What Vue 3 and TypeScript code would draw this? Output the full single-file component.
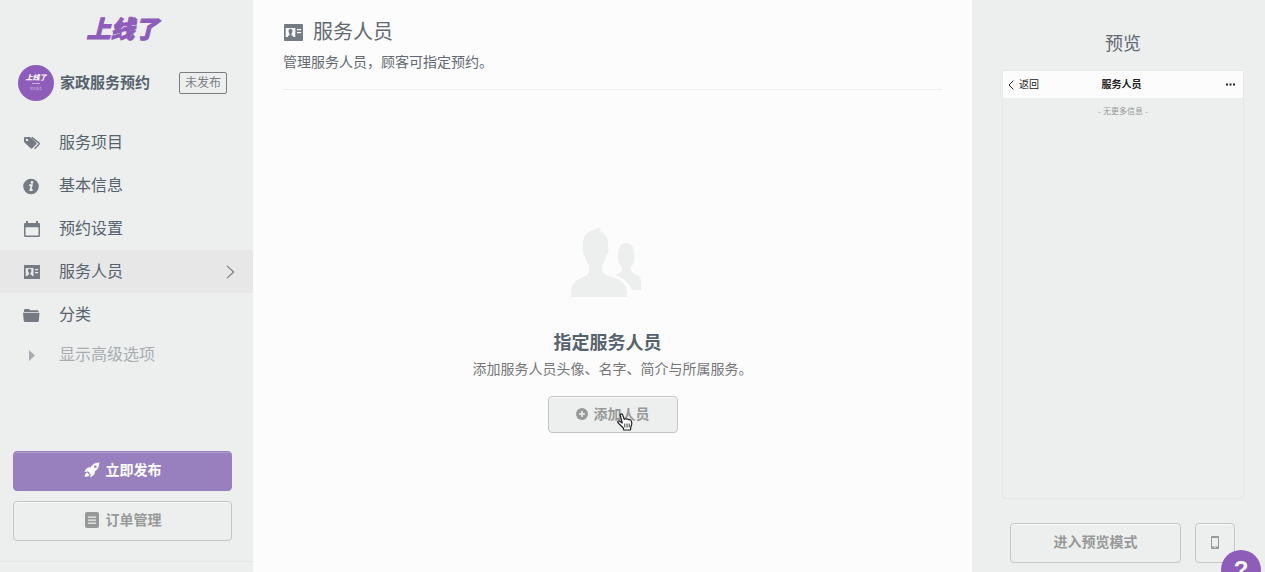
<script setup lang="ts">
import { ref } from 'vue'

type IconName = 'tags' | 'info' | 'calendar' | 'card' | 'folder'

interface MenuItem {
  label: string
  icon: IconName
}

const menu: MenuItem[] = [
  { label: '服务项目', icon: 'tags' },
  { label: '基本信息', icon: 'info' },
  { label: '预约设置', icon: 'calendar' },
  { label: '服务人员', icon: 'card' },
  { label: '分类', icon: 'folder' },
]

const active = ref('服务人员')
</script>

<template>
  <div class="page">
    <aside class="sidebar">
      <div class="logo">上线了</div>

      <div class="site">
        <div class="avatar">
          <span class="avatar-name">上线了</span>
          <span class="avatar-line"></span>
          <span class="avatar-sub">家政服务</span>
        </div>
        <strong class="site-name">家政服务预约</strong>
        <span class="status">未发布</span>
      </div>

      <nav class="menu">
        <a
          v-for="item in menu"
          :key="item.label"
          href="#"
          class="menu-item"
          :class="{ active: item.label === active }"
          @click.prevent="active = item.label"
        >
          <svg v-if="item.icon === 'tags'" class="menu-icon" viewBox="0 0 18 18" aria-hidden="true">
            <path fill="currentColor" fill-rule="evenodd" d="M1 4.2Q1 3 2.2 3H6.5Q7.3 3 8 3.6L13.2 8.5Q14 9.3 13.2 10.2L9.2 14.3Q8.4 15 7.6 14.3L1.7 8.7Q1 8.1 1 7.3ZM4 4.7A1.2 1.2 0 1 0 4 7.1A1.2 1.2 0 1 0 4 4.7Z" />
            <path fill="none" stroke="currentColor" stroke-width="1.4" d="M9 3.4L16 9.1Q16.5 9.6 16 10.2L11.6 14.7" />
          </svg>
          <svg v-else-if="item.icon === 'info'" class="menu-icon" viewBox="0 0 18 18" aria-hidden="true">
            <circle cx="8" cy="9.5" r="7.8" fill="currentColor" />
            <path fill="none" stroke="#edefee" stroke-width="1.9" d="M6.2 8.1H8.7L7.5 13H9.6" />
            <circle cx="9" cy="5.4" r="1.3" fill="#edefee" />
          </svg>
          <svg v-else-if="item.icon === 'calendar'" class="menu-icon" viewBox="0 0 18 18" aria-hidden="true">
            <path fill="currentColor" fill-rule="evenodd" d="M1 4Q1 3 2 3H3V1H5V3H13V1H15V3H16Q17 3 17 4V15.5Q17 17 15.5 17H2.5Q1 17 1 15.5ZM2.5 7.3V15.5H15.5V7.3Z" />
          </svg>
          <svg v-else-if="item.icon === 'card'" class="menu-icon" viewBox="0 0 18 18" aria-hidden="true">
            <path fill="currentColor" fill-rule="evenodd" d="M1 2H17V16H1ZM2.7 5V13H4.7V12L6 11.4V10Q4.9 8.9 5 7.2Q5.2 5.8 6.7 5.8Q8.2 5.8 8.4 7.2Q8.5 8.9 7.4 10V11.4L8.8 12V13H10.5V5ZM12 6V7.3H15.2V6ZM12 9V10.3H15.2V9Z" />
          </svg>
          <svg v-else class="menu-icon" viewBox="0 0 18 18" aria-hidden="true">
            <path fill="currentColor" d="M1 6V4.2Q1 3 2.2 3H6L7 4.2H14.5Q15.5 4.2 15.5 5.3V6ZM0 6.8H16.5L15.8 15Q15.7 16 14.6 16H2Q1 16 .8 15Z" />
          </svg>
          <span>{{ item.label }}</span>
          <svg v-if="item.label === active" class="chevron" viewBox="0 0 9 14" aria-hidden="true">
            <path fill="none" stroke="currentColor" stroke-width="1.1" d="M1 .8L7.7 7L1 13.2" />
          </svg>
        </a>
        <button type="button" class="menu-item advanced">
          <svg class="menu-icon" viewBox="0 0 18 18" aria-hidden="true">
            <path fill="currentColor" d="M6 4L12 9.5L6 15Z" />
          </svg>
          <span>显示高级选项</span>
        </button>
      </nav>

      <div class="actions">
        <button type="button" class="btn primary">
          <svg class="btn-icon" viewBox="0 0 16 16" aria-hidden="true">
            <path fill="currentColor" fill-rule="evenodd" d="M15.2.6Q10.8.4 7.8 3.6L6.2 5.4Q3.5 5 2.2 7L.3 9.7L4.2 9.6L6.6 12L6.2 15.4L9.2 13.6Q11 12.4 10.7 9.8L12.4 8.2Q15.4 5.3 15.2.6ZM11.3 3.4A1.3 1.3 0 1 1 11.3 6A1.3 1.3 0 1 1 11.3 3.4Z" />
            <path fill="currentColor" d="M2.9 10.2L5.7 12.9Q3.8 15 .6 14.8Q.8 11.8 2.9 10.2Z" />
          </svg>
          <span>立即发布</span>
        </button>
        <button type="button" class="btn">
          <svg class="btn-icon" viewBox="0 0 16 16" aria-hidden="true">
            <rect x="1" width="14" height="16" rx="2" fill="currentColor" />
            <path stroke="#edefee" stroke-width="1.2" d="M4 5.1H12M4 8.1H12M4 11.1H12" />
          </svg>
          <span>订单管理</span>
        </button>
      </div>
      <div class="sidebar-foot"></div>
    </aside>

    <main class="content">
      <header class="content-head">
        <h1>
          <svg class="title-icon" viewBox="0 0 20 18" aria-hidden="true">
            <path fill="currentColor" fill-rule="evenodd" d="M1.8 1H19.2Q20 1 20 1.8V17.2Q20 18 19.2 18H1.8Q1 18 1 17.2V1.8Q1 1 1.8 1ZM2.7 5V14H5V13L6.5 12.2V10.7Q5.3 9.3 5.5 7.4Q5.8 5.8 7.5 5.8Q9.2 5.8 9.5 7.4Q9.7 9.3 8.5 10.7V12.2L10.2 13V14H12.3V5ZM14 6V7.3H18.3V6ZM14 9V10.3H18.3V9Z" />
          </svg>
          <span>服务人员</span>
        </h1>
        <p>管理服务人员，顾客可指定预约。</p>
      </header>

      <section class="empty">
        <svg class="people" viewBox="0 0 70 70" aria-hidden="true">
          <path fill="currentColor" d="M30 0Q27 4 31 5Q37 9 37 16V20Q38 21 37 25Q37 28 35 29Q34 35 31 38V43Q32 47 38 49L47 52Q56 57 56 66V70H0V65Q0 56 8 52L16 48Q19 46 18 42V38Q15 35 14 29Q12 29 12 24Q11 21 12 20V14Q13 6 22 3Q26 1 30 0Z" />
          <path fill="currentColor" d="M47 25Q48 16 55 16Q62 16 63 25V34Q62 38 60 40V43Q61 46 66 48Q70 50 70 54V63H61Q57 54 49 50L44 48Q50 46 51 43V40Q48 38 47 33Z" />
        </svg>
        <h2>指定服务人员</h2>
        <p>添加服务人员头像、名字、简介与所属服务。</p>
        <button type="button" class="btn add">
          <svg class="plus-icon" viewBox="0 0 12 12" aria-hidden="true">
            <circle cx="6" cy="6" r="6" fill="currentColor" />
            <path stroke="#edefee" stroke-width="1.6" d="M3 6H9M6 3V9" />
          </svg>
          <span>添加人员</span>
          <svg class="pointer" viewBox="0 0 16 18" aria-hidden="true">
            <path fill="#fff" stroke="#222" stroke-width="1.2" stroke-linejoin="round" d="M3.2 2Q3 .8 4.2.8Q5.2.8 5.6 1.8L7.2 6.4Q8 5.2 9.3 6.2Q10.6 5.4 11.7 6.7Q13.8 6.2 14.4 8.3Q15.3 11 14 13.4L13.4 17H6.8L6.2 14.8L2 10.8Q.1 9 1 8.2Q2 7.4 3.5 8.7L5.2 10Z" />
            <path fill="none" stroke="#222" stroke-width=".9" d="M7.8 10.5V14.5M10 10.5V14.5M12.2 10.5V14.5" />
          </svg>
        </button>
      </section>
    </main>

    <aside class="preview">
      <h2>预览</h2>
      <div class="phone">
        <div class="phone-bar">
          <a href="#" class="back" @click.prevent>
            <svg viewBox="0 0 6 10" aria-hidden="true">
              <path fill="none" stroke="currentColor" stroke-width="1" d="M5.3.7L1 5L5.3 9.3" />
            </svg>
            <span>返回</span>
          </a>
          <strong>服务人员</strong>
          <button type="button" class="more" aria-label="更多">
            <svg viewBox="0 0 9 3" aria-hidden="true">
              <path fill="currentColor" d="M0 .5H2V2.5H0ZM3.5.5H5.5V2.5H3.5ZM7 .5H9V2.5H7Z" />
            </svg>
          </button>
        </div>
        <p>- 无更多信息 -</p>
      </div>
      <div class="preview-actions">
        <button type="button" class="btn mode">进入预览模式</button>
        <button type="button" class="btn device" aria-label="手机">
          <svg viewBox="0 0 8 13" aria-hidden="true">
            <path fill="currentColor" fill-rule="evenodd" d="M1 0H7Q8 0 8 1V12Q8 13 7 13H1Q0 13 0 12V1Q0 0 1 0ZM1 2V10.5H7V2ZM3 11.3V12.1H5V11.3Z" />
          </svg>
        </button>
      </div>
    </aside>

    <button type="button" class="help" aria-label="帮助">?</button>
  </div>
</template>

<style>
body {
  margin: 0;
  overflow: hidden;
}
</style>

<style scoped>
.page {
  display: flex;
  min-height: 100vh;
  background: #fcfcfc;
  color: #636972;
  font-family: "Liberation Sans", "Noto Sans CJK SC", sans-serif;
  font-size: 14px;
  line-height: 20px;
}

.page * {
  box-sizing: border-box;
}

h1,
h2,
p {
  margin: 0;
}

button {
  font: inherit;
  cursor: pointer;
}

a {
  color: inherit;
  text-decoration: none;
}

svg {
  display: block;
  flex: none;
}

.sidebar {
  display: flex;
  flex-direction: column;
  flex: none;
  width: 253px;
  background: #edefee;
}

.logo {
  margin-top: 14px;
  padding-right: 8px;
  color: #8e5dba;
  font-size: 24px;
  font-style: italic;
  font-weight: 900;
  line-height: 32px;
  text-align: center;
  -webkit-text-stroke: 1px #8e5dba;
}

.site {
  display: flex;
  align-items: center;
  margin-top: 19px;
  padding: 0 26px 0 18px;
}

.avatar {
  display: flex;
  flex-direction: column;
  align-items: center;
  flex: none;
  width: 36px;
  height: 36px;
  padding-top: 8px;
  border-radius: 50%;
  background: #8e5dba;
  color: #fff;
}

.avatar-name {
  font-size: 7px;
  font-style: italic;
  font-weight: 900;
  line-height: 10px;
}

.avatar-line {
  width: 8px;
  height: 1px;
  background: #c9b1de;
}

.avatar-sub {
  color: #c9b1de;
  font-size: 3px;
  line-height: 10px;
}

.site-name {
  margin-left: 6px;
  color: #56636f;
  font-size: 15px;
}

.status {
  margin-left: auto;
  padding: 0 5px;
  border: 1px solid #7a7d80;
  border-radius: 2px;
  color: #7a7d80;
  font-size: 12px;
}

.menu {
  display: flex;
  flex-direction: column;
  margin-top: 20px;
}

.menu-item {
  display: flex;
  align-items: center;
  height: 43px;
  padding: 0 18px 0 23px;
  color: #56636f;
  font-size: 16px;
}

.menu-item.active {
  background: #e7e7e7;
}

.menu-icon {
  width: 18px;
  height: 18px;
  margin-right: 18px;
  color: #757b82;
}

.chevron {
  width: 9px;
  height: 14px;
  margin-left: auto;
  color: #757b82;
}

.menu-item.advanced {
  height: 37px;
  border: 0;
  background: none;
  color: #a8acb0;
}

.advanced .menu-icon {
  color: #a8acb0;
}

.actions {
  display: flex;
  flex-direction: column;
  gap: 10px;
  margin-top: auto;
  padding: 20px 21px 20px 13px;
}

.sidebar-foot {
  height: 11px;
  border-top: 1px solid #e5e7e6;
}

.btn {
  display: flex;
  align-items: center;
  justify-content: center;
  height: 40px;
  padding: 0 0 2px;
  border: 1px solid #c3c6c5;
  border-radius: 4px;
  background: #edefee;
  box-shadow: inset 0 1px #fafafa;
  color: #979999;
  font-weight: 700;
}

.btn.primary {
  border-color: #9880bf;
  background: #9880bf;
  box-shadow: inset 0 1px #b3a0d0;
  color: #fff;
}

.btn-icon {
  width: 16px;
  height: 16px;
  margin-right: 6px;
}

.content {
  display: flex;
  flex-direction: column;
  flex: 1;
  min-width: 0;
  padding: 0 30px;
}

.content-head {
  padding: 18px 0 17px;
  border-bottom: 1px solid #ededed;
}

h1 {
  display: flex;
  align-items: center;
  font-size: 20px;
  font-weight: 400;
  line-height: 28px;
}

.title-icon {
  width: 20px;
  height: 18px;
  margin-right: 10px;
  color: #757b82;
}

.content-head p {
  margin-top: 6px;
}

.empty {
  display: flex;
  flex-direction: column;
  align-items: center;
  margin-top: 137px;
}

.people {
  width: 70px;
  height: 70px;
  margin-right: 13px;
  color: #edefee;
}

.empty h2 {
  margin-top: 34px;
  margin-right: 10px;
  color: #56636f;
  font-size: 18px;
  line-height: 24px;
}

.empty p {
  margin-top: 4px;
  color: #757678;
}

.btn.add {
  position: relative;
  width: 130px;
  height: 37px;
  margin-top: 17px;
}

.plus-icon {
  width: 12px;
  height: 12px;
  margin-right: 6px;
}

.pointer {
  position: absolute;
  top: 16px;
  left: 68px;
  width: 16px;
  height: 18px;
}

.preview {
  display: flex;
  flex-direction: column;
  flex: none;
  width: 293px;
  padding: 32px 21px 9px 30px;
  background: #edefee;
}

.preview h2 {
  font-size: 18px;
  font-weight: 400;
  line-height: 24px;
  text-align: center;
}

.phone {
  flex: 1;
  margin-top: 14px;
  border: 1px solid #e6e8e7;
  border-radius: 3px;
}

.phone-bar {
  display: grid;
  grid-template-columns: 1fr auto 1fr;
  align-items: center;
  height: 27px;
  padding: 0 8px 0 5px;
  background: #fcfcfc;
  color: #222;
  font-size: 10px;
}

.back {
  display: flex;
  align-items: center;
  gap: 5px;
}

.back svg {
  width: 6px;
  height: 10px;
}

.more {
  justify-self: end;
  padding: 0;
  border: 0;
  background: none;
  color: #222;
}

.more svg {
  width: 9px;
  height: 3px;
}

.phone p {
  margin-top: 4px;
  color: #969898;
  font-size: 8px;
  text-align: center;
}

.preview-actions {
  display: flex;
  gap: 14px;
  margin-top: 24px;
  padding: 0 9px 0 8px;
}

.mode {
  flex: 1;
}

.device {
  width: 40px;
}

.device svg {
  width: 8px;
  height: 13px;
}

.help {
  position: fixed;
  right: 4px;
  bottom: -18px;
  width: 40px;
  height: 40px;
  padding: 0;
  border: 0;
  border-radius: 50%;
  background: #8e5dba;
  color: #fff;
  font-size: 24px;
  font-weight: 700;
}
</style>
